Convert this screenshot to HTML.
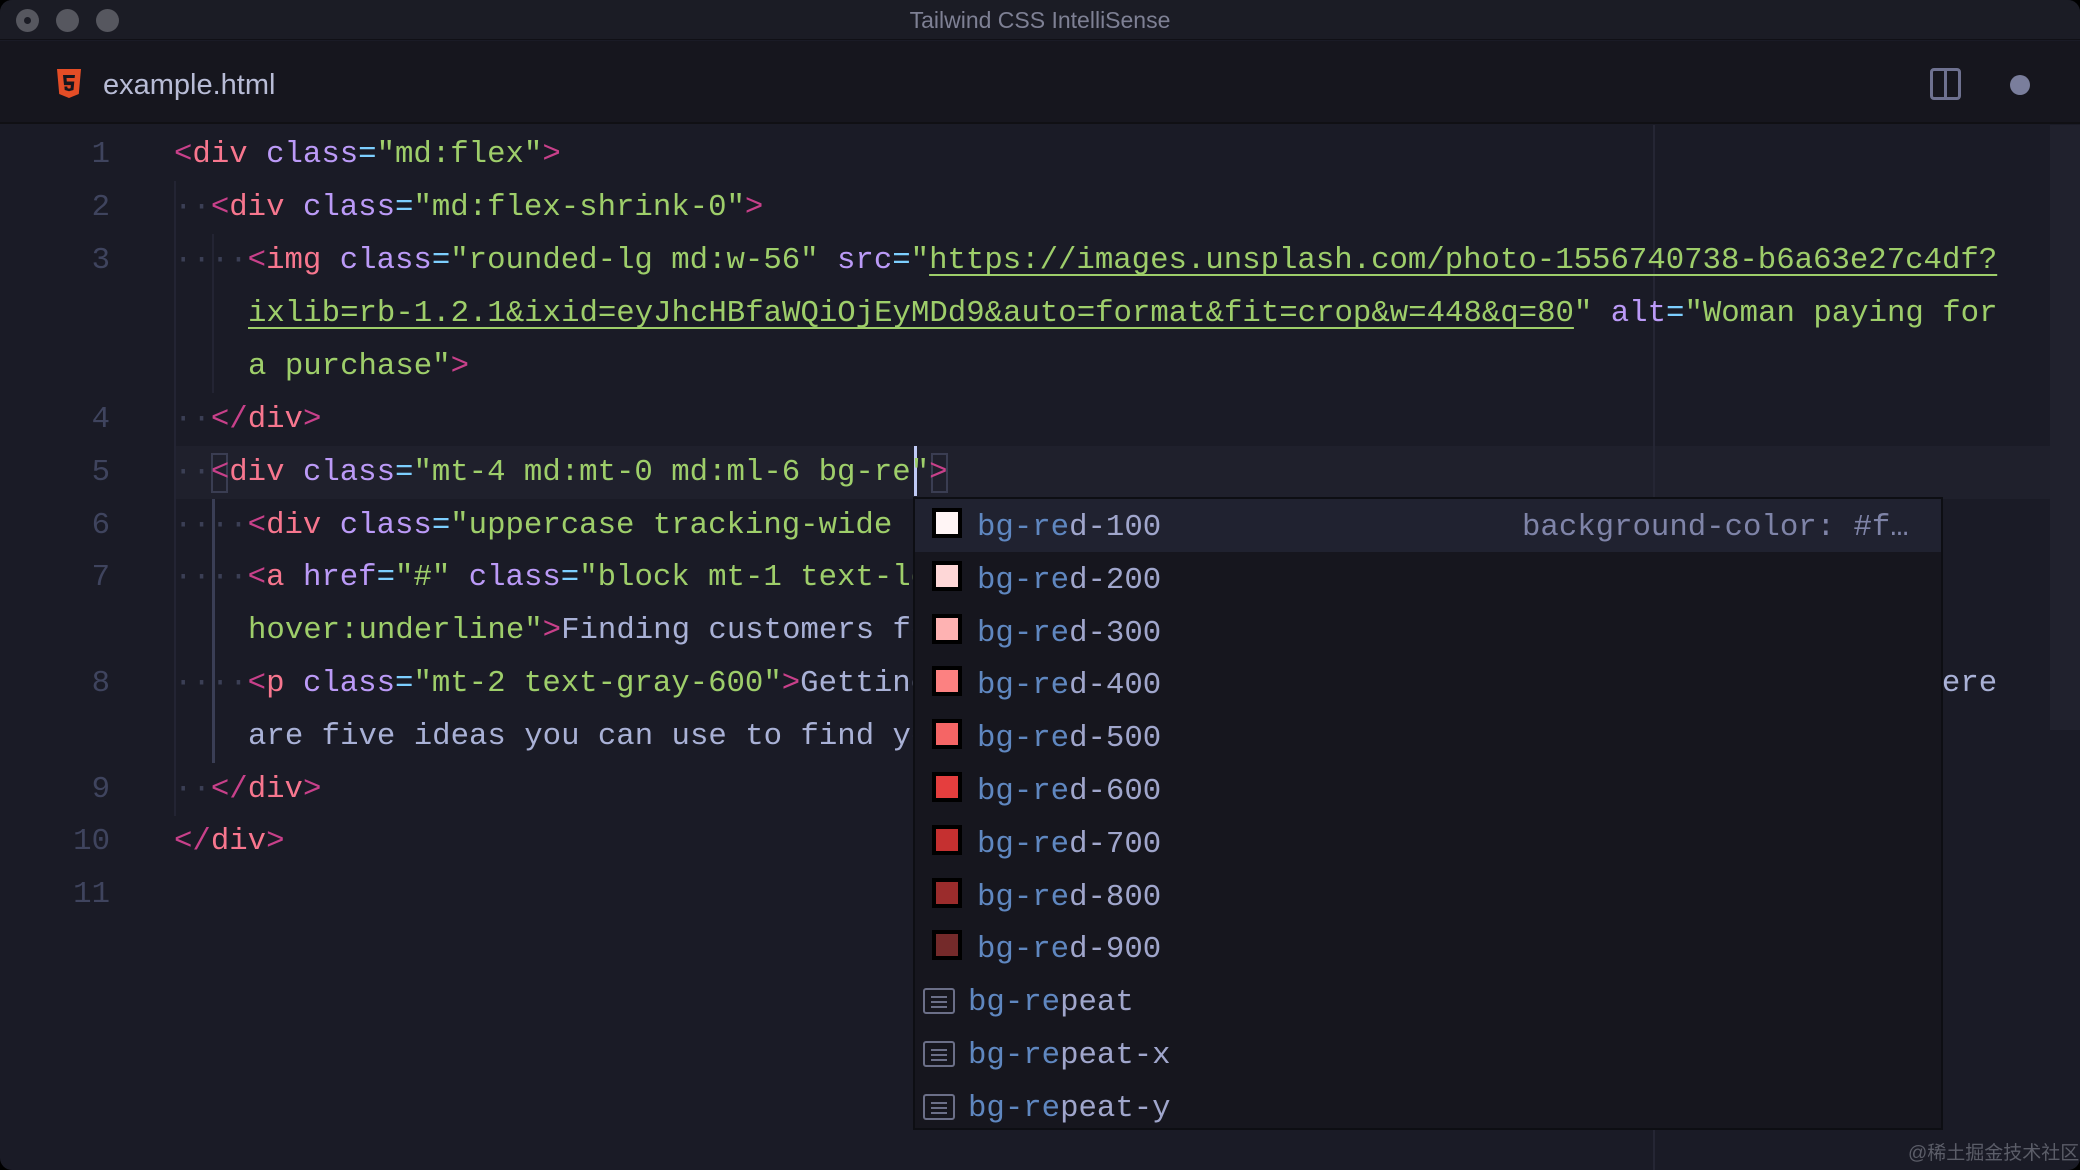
<!DOCTYPE html>
<html><head><meta charset="utf-8">
<style>
*{margin:0;padding:0;box-sizing:border-box}
html,body{width:2080px;height:1170px;background:#000;overflow:hidden}
.win{position:absolute;left:0;top:0;width:2080px;height:1170px;background:#1a1b26;border-radius:12px;overflow:hidden}
.title{position:absolute;left:0;top:0;width:2080px;height:40px;background:#1b1c25;border-bottom:1px solid #101016;text-align:center;font:23px "Liberation Sans",sans-serif;color:#7e8094;line-height:40px}
.tl{position:absolute;top:9px;width:23px;height:23px;border-radius:50%;background:#56575f}
.tabbar{position:absolute;left:0;top:41px;width:2080px;height:83px;background:#16161e;border-bottom:2px solid #101014}
.tabname{position:absolute;left:103px;top:28px;font:29px "Liberation Sans",sans-serif;color:#b8bcd6}
.code{position:absolute;left:0;top:128px;width:2080px;height:1042px;font-family:"Liberation Mono",monospace;font-size:30.7px}
.ln{position:absolute;left:0;width:110px;text-align:right;color:#3f445e;height:53px;line-height:53px}
.l{position:absolute;white-space:pre;height:53px;line-height:53px;color:#a9b1d6}
.p{color:#c8408a}.t{color:#f7768e}.a{color:#bb9af7}.e{color:#7dcfff}.s{color:#9ece6a}.u{text-decoration:underline;text-decoration-thickness:2px;text-underline-offset:6px}
.d{color:#3b3f55}
.pop{position:absolute;left:913px;top:497px;width:1030px;height:633px;background:#16161e;border:2px solid #0d0e13;font-family:"Liberation Mono",monospace;font-size:30.7px}
.it{position:absolute;left:0;width:1026px;height:53px;line-height:57px;white-space:pre}
.sw{position:absolute;left:17px;top:9px;width:30px;height:30px;border:4px solid #000}
.m{color:#5f87c0}.r{color:#a0a6cc}
.ic{position:absolute;left:8px;top:14px;width:32px;height:26px;border:2px solid #6b6f88;border-radius:3px}
.ic i{position:absolute;left:6px;width:16px;height:2px;background:#6b6f88}
</style></head><body>
<div class="win">
 <div class="title">Tailwind CSS IntelliSense
  <div class="tl" style="left:16px"><div style="position:absolute;left:8px;top:8px;width:7px;height:7px;border-radius:50%;background:#1b1c25"></div></div>
  <div class="tl" style="left:56px"></div>
  <div class="tl" style="left:96px"></div>
 </div>
 <div class="tabbar">
  <svg style="position:absolute;left:56px;top:28px" width="26" height="30" viewBox="0 0 26 30"><path d="M1 0h24l-2.2 25L13 29 3.2 25z" fill="#e44d26"/><path d="M7 6h12l-.4 3H10.5l.3 3.5h7.5l-.8 8.5L13 22.3 8.7 21l-.3-3.5h2.9l.2 1.6 1.5.5 1.6-.5.3-3H8z" fill="#16161e"/></svg>
  <div class="tabname">example.html</div>
  <div style="position:absolute;left:1930px;top:27px;width:31px;height:32px;border:3px solid #6e7190;border-radius:4px"><div style="position:absolute;left:11px;top:0;width:3px;height:26px;background:#6e7190"></div></div>
  <div style="position:absolute;left:2010px;top:34px;width:20px;height:20px;border-radius:50%;background:#7a7e9c"></div>
 </div>
 <div class="code">
  <div style="position:absolute;left:174px;top:318px;width:1876px;height:53px;background:#1f202c"></div>
  <div style="position:absolute;left:1653px;top:-3px;width:2px;height:1045px;background:#252634"></div>
  <div style="position:absolute;left:2050px;top:-3px;width:30px;height:605px;background:#20212d"></div>
  <div style="position:absolute;left:174px;top:53px;width:2px;height:635px;background:#232433"></div>
  <div style="position:absolute;left:212px;top:106px;width:2px;height:159px;background:#232433"></div>
  <div style="position:absolute;left:212px;top:371px;width:3px;height:264px;background:#3a3e55"></div>
  <div style="position:absolute;left:211px;top:325px;width:17px;height:40px;border:2px solid #3a3d52"></div>
  <div style="position:absolute;left:931px;top:325px;width:17px;height:40px;border:2px solid #3a3d52"></div>
  <div style="position:absolute;left:914px;top:318px;width:3px;height:50px;background:#c0caf5"></div>

  <div class="ln" style="top:0px">1</div>
  <div class="ln" style="top:53px">2</div>
  <div class="ln" style="top:106px">3</div>
  <div class="ln" style="top:265px">4</div>
  <div class="ln" style="top:318px">5</div>
  <div class="ln" style="top:371px">6</div>
  <div class="ln" style="top:423px">7</div>
  <div class="ln" style="top:529px">8</div>
  <div class="ln" style="top:635px">9</div>
  <div class="ln" style="top:687px">10</div>
  <div class="ln" style="top:740px">11</div>

  <div class="l" style="left:174px;top:0px"><span class="p">&lt;</span><span class="t">div</span> <span class="a">class</span><span class="e">=</span><span class="s">"md:flex"</span><span class="p">&gt;</span></div>
  <div class="l" style="left:174px;top:53px"><span class="d">··</span><span class="p">&lt;</span><span class="t">div</span> <span class="a">class</span><span class="e">=</span><span class="s">"md:flex-shrink-0"</span><span class="p">&gt;</span></div>
  <div class="l" style="left:174px;top:106px"><span class="d">····</span><span class="p">&lt;</span><span class="t">img</span> <span class="a">class</span><span class="e">=</span><span class="s">"rounded-lg md:w-56"</span> <span class="a">src</span><span class="e">=</span><span class="s">"<span class="u">https://images.unsplash.com/photo-1556740738-b6a63e27c4df?</span></span></div>
  <div class="l" style="left:248px;top:159px"><span class="s"><span class="u">ixlib=rb-1.2.1&amp;ixid=eyJhcHBfaWQiOjEyMDd9&amp;auto=format&amp;fit=crop&amp;w=448&amp;q=80</span>"</span> <span class="a">alt</span><span class="e">=</span><span class="s">"Woman paying for</span></div>
  <div class="l" style="left:248px;top:212px"><span class="s">a purchase"</span><span class="p">&gt;</span></div>
  <div class="l" style="left:174px;top:265px"><span class="d">··</span><span class="p">&lt;/</span><span class="t">div</span><span class="p">&gt;</span></div>
  <div class="l" style="left:174px;top:318px"><span class="d">··</span><span class="p">&lt;</span><span class="t">div</span> <span class="a">class</span><span class="e">=</span><span class="s">"mt-4 md:mt-0 md:ml-6 bg-re"</span><span class="p">&gt;</span></div>
  <div class="l" style="left:174px;top:371px"><span class="d">····</span><span class="p">&lt;</span><span class="t">div</span> <span class="a">class</span><span class="e">=</span><span class="s">"uppercase tracking-wide text-sm text-indigo-600 font-bold"</span></div>
  <div class="l" style="left:174px;top:423px"><span class="d">····</span><span class="p">&lt;</span><span class="t">a</span> <span class="a">href</span><span class="e">=</span><span class="s">"#"</span> <span class="a">class</span><span class="e">=</span><span class="s">"block mt-1 text-lg leading-tight font-semibold</span></div>
  <div class="l" style="left:248px;top:476px"><span class="s">hover:underline"</span><span class="p">&gt;</span>Finding customers for your new business</div>
  <div class="l" style="left:174px;top:529px"><span class="d">····</span><span class="p">&lt;</span><span class="t">p</span> <span class="a">class</span><span class="e">=</span><span class="s">"mt-2 text-gray-600"</span><span class="p">&gt;</span>Getting a new business off the ground is a lot of hard work. Here</div>
  <div class="l" style="left:248px;top:582px">are five ideas you can use to find your first customers.</div>
  <div class="l" style="left:174px;top:635px"><span class="d">··</span><span class="p">&lt;/</span><span class="t">div</span><span class="p">&gt;</span></div>
  <div class="l" style="left:174px;top:687px"><span class="p">&lt;/</span><span class="t">div</span><span class="p">&gt;</span></div>
 </div>

 <div class="pop">
  <div class="it" style="top:0;background:#202230"><div class="sw" style="background:#fff5f5"></div><span style="position:absolute;left:62px"><span class="m">bg-re</span><span class="r">d-100</span></span><span style="position:absolute;left:607px;color:#7f84a8">background-color: #f…</span></div>
  <div class="it" style="top:53px"><div class="sw" style="background:#fed7d7"></div><span style="position:absolute;left:62px"><span class="m">bg-re</span><span class="r">d-200</span></span></div>
  <div class="it" style="top:106px"><div class="sw" style="background:#feb2b2"></div><span style="position:absolute;left:62px"><span class="m">bg-re</span><span class="r">d-300</span></span></div>
  <div class="it" style="top:158px"><div class="sw" style="background:#fc8181"></div><span style="position:absolute;left:62px"><span class="m">bg-re</span><span class="r">d-400</span></span></div>
  <div class="it" style="top:211px"><div class="sw" style="background:#f56565"></div><span style="position:absolute;left:62px"><span class="m">bg-re</span><span class="r">d-500</span></span></div>
  <div class="it" style="top:264px"><div class="sw" style="background:#e53e3e"></div><span style="position:absolute;left:62px"><span class="m">bg-re</span><span class="r">d-600</span></span></div>
  <div class="it" style="top:317px"><div class="sw" style="background:#c53030"></div><span style="position:absolute;left:62px"><span class="m">bg-re</span><span class="r">d-700</span></span></div>
  <div class="it" style="top:370px"><div class="sw" style="background:#9b2c2c"></div><span style="position:absolute;left:62px"><span class="m">bg-re</span><span class="r">d-800</span></span></div>
  <div class="it" style="top:422px"><div class="sw" style="background:#742a2a"></div><span style="position:absolute;left:62px"><span class="m">bg-re</span><span class="r">d-900</span></span></div>
  <div class="it" style="top:475px"><div class="ic"><i style="top:6px"></i><i style="top:11px"></i><i style="top:16px"></i></div><span style="position:absolute;left:53px"><span class="m">bg-re</span><span class="r">peat</span></span></div>
  <div class="it" style="top:528px"><div class="ic"><i style="top:6px"></i><i style="top:11px"></i><i style="top:16px"></i></div><span style="position:absolute;left:53px"><span class="m">bg-re</span><span class="r">peat-x</span></span></div>
  <div class="it" style="top:581px"><div class="ic"><i style="top:6px"></i><i style="top:11px"></i><i style="top:16px"></i></div><span style="position:absolute;left:53px"><span class="m">bg-re</span><span class="r">peat-y</span></span></div>
 </div>
 <div style="position:absolute;left:1908px;top:1138px;font:19px 'Liberation Sans','Noto Sans CJK SC',sans-serif;color:#5b5d68">@稀土掘金技术社区</div>
</div>
</body></html>
